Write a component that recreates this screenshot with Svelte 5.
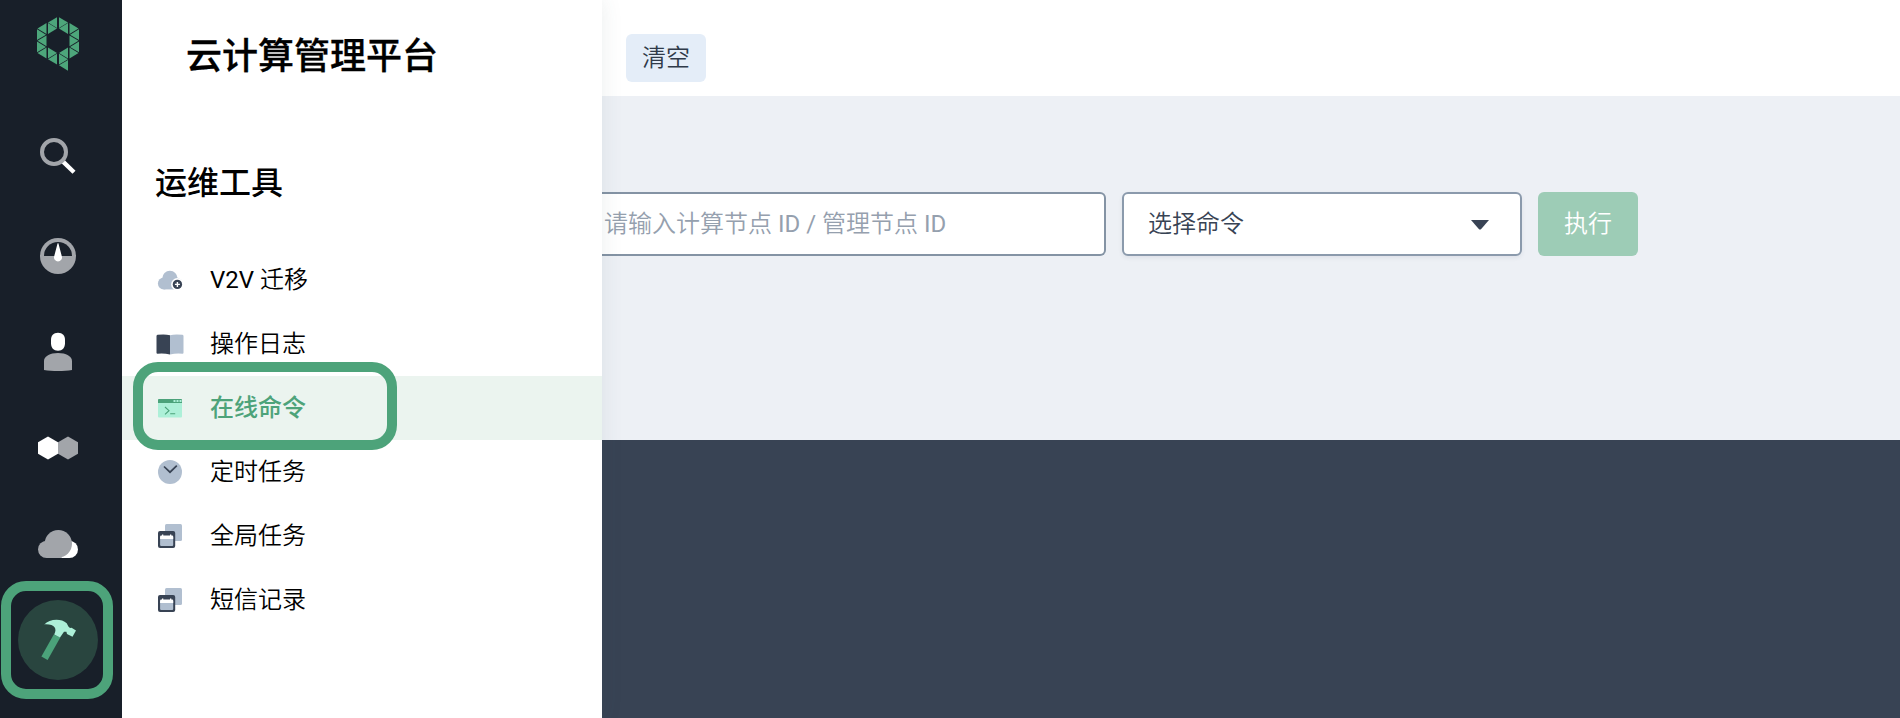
<script>
  const menu = [
    { latin: 'V2V ', label: '迁移', icon: 'migrate' },
    { label: '操作日志', icon: 'book' },
    { label: '在线命令', icon: 'terminal', active: true },
    { label: '定时任务', icon: 'clock' },
    { label: '全局任务', icon: 'calendar' },
    { label: '短信记录', icon: 'calendar' }
  ];
  const nav = ['search', 'gauge', 'user', 'hex', 'cloud', 'hammer'];

  // Logo triangles: [x of the vertical edge, x of the tip, centre y]
  const left = [
    [57, 48, 22.6], [48, 57, 28.5],
    [46.5, 37.5, 28.5], [37, 46, 34.7], [46.5, 37.5, 40.8], [37, 46, 46.9], [46.5, 37.5, 53],
    [48, 57, 53], [57, 48, 59.2]
  ];
  const triangles = [
    ...left,
    ...left.map(([a, b, y]) => [116 - a, 116 - b, y]),
    [68, 59, 65.3]
  ];
</script>

<div class="page">
  <nav class="rail">
    <svg class="logo" width="122" height="120" viewBox="0 0 122 120">
      {#each triangles as [a, b, y]}
        <path d={`M${a} ${y - 5.4}V${y + 5.4}L${b} ${y}Z`} fill="#4da67b" />
      {/each}
    </svg>
    {#each nav as name}
      <div class="nav-item" class:current={name === 'hammer'}>
        <svg width="80" height="80" viewBox="0 0 80 80">
          {#if name === 'search'}
            <path d="M44 40.600L56 52.300" stroke="#fff" stroke-width="4.300" />
            <circle cx="36" cy="32" r="12" fill="none" stroke="#a2a5aa" stroke-width="4" />
          {:else if name === 'gauge'}
            <circle cx="40" cy="40" r="18" fill="#a2a5aa" />
            <path d="M26 40a14 14 0 0 1 28 0z" fill="#181f29" />
            <path d="M39.600 27.200h.8L43.800 40.200a4 4 0 1 1-7.600 0z" fill="#fff" />
          {:else if name === 'user'}
            <path d="M40 20.800c4.700 0 7 3 7 7v3.500c0 4.500-2.500 7.500-7 7.500s-7-3-7-7.500v-3.500c0-4 2.300-7 7-7z" fill="#fff" />
            <path d="M26 49c0-4.500 6-8 14-8s14 3.500 14 8v9c-4 .7-9 1-14 1s-10-.3-14-1z" fill="#a2a5aa" />
          {:else if name === 'hex'}
            <path d="M50 28.400l10 5.800v11.600l-10 5.800-10-5.800V34.200z" fill="#a2a5aa" />
            <path d="M30 28.400l10 5.800v11.600l-10 5.800-10-5.800V34.200z" fill="#fff" />
          {:else if name === 'cloud'}
            <circle cx="51.400" cy="45.400" r="8.600" fill="#fff" />
            <path d="M40 45h11v9H40z" fill="#fff" />
            <circle cx="28.600" cy="45.400" r="8.600" fill="#a2a5aa" />
            <circle cx="40.300" cy="39.700" r="13.700" fill="#a2a5aa" />
            <path d="M28.600 44H44v9.500q-1.500.5-3 .5H28.600z" fill="#a2a5aa" />
          {:else}
            <path d="M35.800 34.500L42.300 37.500L29.600 60L23.400 56.500z" fill="#4ba27a" />
            <path d="M26.300 24.400C31 19 43 17.800 48.700 23.200L50.400 26.500L52 27.900L53.600 27.700L58 30.400L54.500 36.800L49 34L48.400 31.800L46 31.700L42 37.600L36.200 34.500C39.500 28.500 36.500 23.800 26.300 24.400z" fill="#adf0d8" />
          {/if}
        </svg>
      </div>
    {/each}
    <div class="marker rail-marker"></div>
  </nav>

  <aside class="drawer">
    <h1>云计算管理平台</h1>
    <h2>运维工具</h2>
    <ul>
      {#each menu as item}
        <li class:active={item.active}>
          <svg width="28" height="28" viewBox="0 0 28 28">
            {#if item.icon === 'migrate'}
              <circle cx="7.800" cy="17.500" r="5.900" fill="#b1bfd0" />
              <circle cx="13.900" cy="12.300" r="7.600" fill="#b1bfd0" />
              <circle cx="20.200" cy="17.500" r="5.900" fill="#b1bfd0" />
              <path d="M7.800 14h12v9.400h-12z" fill="#b1bfd0" />
              <circle cx="21.400" cy="18.400" r="6.300" fill="#fff" />
              <circle cx="21.400" cy="18.400" r="4.700" fill="#384354" />
              <path d="M21.400 15.900v5M18.900 18.400h5" stroke="#fff" stroke-width="1.400" />
            {:else if item.icon === 'book'}
              <path d="M.5 6q0-1 1-1.200Q9 3.800 14 5.200v19.400q-6-1.500-12.500-.8-1 0-1-1z" fill="#384354" />
              <path d="M27.500 6q0-1-1-1.200Q19 3.800 14 5.200v19.400q6-1.500 12.500-.8 1 0 1-1z" fill="#b1bfd0" />
            {:else if item.icon === 'terminal'}
              <rect x="2" y="5" width="24" height="18.500" rx="1" fill="#adf0d8" />
              <path d="M2 9V6a1 1 0 0 1 1-1h22a1 1 0 0 1 1 1v3z" fill="#4ba27a" />
              <path d="M17.500 7h2M20.500 7h2M23.500 7h2" stroke="#adf0d8" stroke-width="2" />
              <path d="M9 13l4 3.700L9 20.400M14.200 19.800h5" fill="none" stroke="#4ba27a" stroke-width="1.100" />
            {:else if item.icon === 'clock'}
              <circle cx="14" cy="14" r="12" fill="#b1bfd0" />
              <path d="M8 8.500l6 5.700L20.800 7.600" fill="none" stroke="#384354" stroke-width="1.700" />
            {:else}
              <rect x="9" y="2" width="17" height="17" rx="1.500" fill="#b1bfd0" />
              <rect x="2" y="9" width="17.200" height="17" rx="2" fill="#384354" />
              <path d="M4.100 15h13.100v8a1 1 0 0 1-1 1H5.100a1 1 0 0 1-1-1z" fill="#b1bfd0" />
              <path d="M4.100 17v-2.500a1 1 0 0 1 1-1h.9v-1h1.300v1h6.700v-1h1.300v1h.9a1 1 0 0 1 1 1V17z" fill="#fff" />
            {/if}
          </svg>
          <span>{#if item.latin}<span class="latin">{item.latin}</span>{/if}{item.label}</span>
        </li>
      {/each}
    </ul>
    <div class="marker menu-marker"></div>
  </aside>

  <main>
    <header><button class="clear">清空</button></header>
    <section class="form">
      <div class="field">请输入计算节点<span class="latin">{' ID / '}</span>管理节点<span class="latin">{' ID'}</span></div>
      <div class="select">
        <span>选择命令</span>
        <svg width="18" height="10" viewBox="0 0 18 10"><path d="M0 0h18L10.200 9q-1.200 1.200-2.400 0z" fill="#384354" /></svg>
      </div>
      <button class="run">执行</button>
    </section>
    <section class="console"></section>
  </main>
</div>

<style>
  :global(body) { margin: 0; }
  .page {
    display: flex;
    width: 1900px;
    height: 718px;
    overflow: hidden;
    background: #fff;
    font: 350 24px/36px Roboto, "Noto Sans CJK SC", sans-serif;
    color: #000;
  }
  .latin { font-weight: 400; white-space: pre; }
  .rail {
    position: relative;
    z-index: 3;
    flex: none;
    width: 122px;
    background: #181f29;
  }
  .logo, .nav-item svg, li svg, .select svg { display: block; }
  .nav-item { width: 80px; height: 80px; margin: 0 0 16px 18px; }
  .current { border-radius: 50%; background: #29453f; }
  .marker {
    position: absolute;
    box-sizing: border-box;
    border: 10px solid #4da37a;
    border-radius: 25px;
  }
  .rail-marker { left: 1px; top: 581px; width: 112px; height: 118px; }
  .menu-marker { left: 11px; top: 362px; width: 264px; height: 88px; }
  .drawer {
    position: relative;
    z-index: 2;
    flex: none;
    width: 480px;
    background: #fff;
    box-shadow: 0 0 20px rgba(56, 90, 84, 0.1);
  }
  h1 { margin: 30px 0 0 64px; font-size: 36px; line-height: 54px; font-weight: 500; -webkit-text-stroke: 0.3px #000; }
  h2 { margin: 75px 0 0 33px; font-size: 32px; line-height: 48px; font-weight: 500; }
  ul { margin: 41px 0 0; padding: 0; list-style: none; }
  li { display: flex; align-items: center; gap: 26px; height: 64px; padding-left: 34px; }
  .active { background: #ebf4ef; color: #4da37a; font-weight: 500; }
  main { flex: 1; min-width: 0; display: flex; flex-direction: column; }
  header { box-sizing: border-box; height: 96px; padding: 34px 0 0 24px; }
  button {
    display: block;
    box-sizing: border-box;
    padding: 0;
    border: 0;
    border-radius: 6px;
    font: inherit;
  }
  .clear { width: 80px; height: 48px; background: #e4edf8; color: #2f3a49; }
  .form {
    display: flex;
    align-items: flex-start;
    gap: 16px;
    box-sizing: border-box;
    height: 344px;
    padding-top: 96px;
    background: #edf0f5;
  }
  .field, .select {
    box-sizing: border-box;
    height: 64px;
    border: 2px solid #8493a4;
    background: #fff;
    line-height: 60px;
    white-space: nowrap;
  }
  .field {
    width: 504px;
    padding-left: 2px;
    border-left: 0;
    border-radius: 0 6px 6px 0;
    color: #95a0ae;
  }
  .select {
    display: flex;
    align-items: center;
    justify-content: space-between;
    width: 400px;
    padding: 0 31px 0 24px;
    border-color: #8b9aac;
    border-radius: 6px;
    color: #384354;
    box-shadow: 0 2px 4px rgba(56, 67, 84, 0.08);
  }
  .select svg { margin-top: 2px; }
  .run { width: 100px; height: 64px; background: #9dccb6; color: #fff; }
  .console { flex: 1; background: #384354; }
</style>
